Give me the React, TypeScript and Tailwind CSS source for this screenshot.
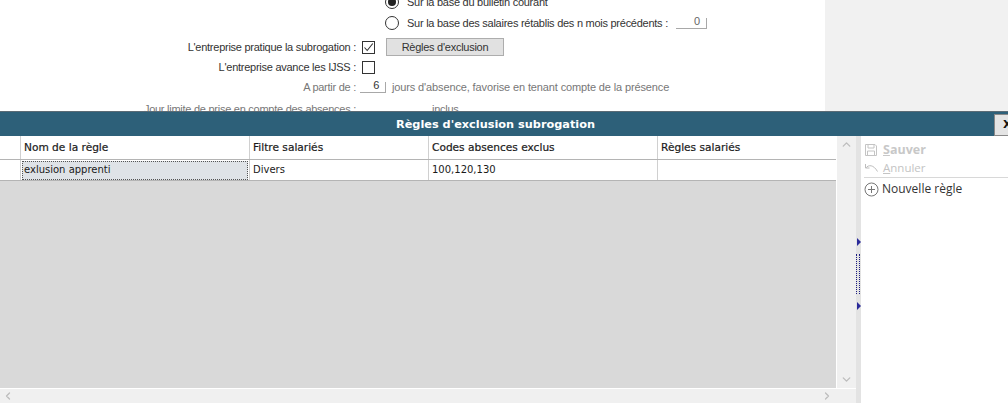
import { ChevronDown, ChevronLeft, ChevronRight, ChevronUp } from "lucide-react";

const form = "font-['Liberation_Sans',sans-serif] text-[11px] leading-[16px] tracking-[-0.26px]";
const grid = "font-['DejaVu_Sans',sans-serif] text-[10px] leading-[14px] text-[#1a1a1a]";

function Spin({ value, width }: { value: string; width: string }) {
  return (
    <div className={`${width} h-[11px] border-b border-r border-[#a8a8a8] flex justify-end items-center pr-[6px] text-[#666]`}>
      <span className="-mt-[3px]">{value}</span>
    </div>
  );
}

function Radio({ checked }: { checked?: boolean }) {
  return (
    <div className="w-[14px] h-[14px] rounded-full border border-[#333] bg-white flex items-center justify-center">
      {checked && <div className="w-[8px] h-[8px] rounded-full bg-[#222]" />}
    </div>
  );
}

function TopForm() {
  return (
    <div className="h-[111px] flex bg-white overflow-hidden">
      <div className={`w-[825px] ${form} text-[#333]`}>
        <div className="flex items-center h-[20px] -mt-[8px] pl-[385px] gap-[8px]">
          <Radio checked />
          <span>Sur la base du bulletin courant</span>
        </div>
        <div className="flex items-center h-[20px] mt-[1px] pl-[385px] gap-[8px]">
          <Radio />
          <span>Sur la base des salaires rétablis des n mois précédents :</span>
          <Spin value="0" width="w-[31px]" />
        </div>
        <div className="flex items-center h-[20px] mt-[4px]">
          <span className="w-[356px] text-right">L'entreprise pratique la subrogation :</span>
          <div className="ml-[6px] w-[13px] h-[13px] border border-[#333] flex items-center justify-center">
            <svg width="11" height="11" viewBox="0 0 11 11" fill="none" stroke="#333" strokeWidth="1.1">
              <path d="M1.5 5.5 L4.2 8.5 L9.8 1.5" />
            </svg>
          </div>
          <div className="ml-[11px] w-[118px] h-[18px] bg-[#e1e1e1] border border-[#adadad] flex items-center justify-center">
            Règles d'exclusion
          </div>
        </div>
        <div className="flex items-center h-[20px]">
          <span className="w-[356px] text-right">L'entreprise avance les IJSS :</span>
          <div className="ml-[6px] w-[13px] h-[13px] border border-[#333]" />
        </div>
        <div className="flex items-center h-[20px] text-[#777]">
          <span className="w-[356px] text-right">A partir de :</span>
          <Spin value="6" width="w-[26px] ml-[4px] [&>span]:text-[#333]" />
          <span className="ml-[6px] tracking-[-0.13px]">jours d'absence, favorise en tenant compte de la présence</span>
        </div>
        <div className="flex h-[20px] mt-[4px] text-[#777]">
          <span className="w-[356px] text-right">Jour limite de prise en compte des absences :</span>
          <span className="ml-[76px]">inclus</span>
        </div>
      </div>
      <div className="flex-1 bg-[#f1f1f1]" />
    </div>
  );
}

const cols = [
  { name: "Nom de la règle", w: "w-[229px]" },
  { name: "Filtre salariés", w: "w-[179px]" },
  { name: "Codes absences exclus", w: "w-[229px]" },
  { name: "Règles salariés", w: "flex-1" },
];

function Table() {
  return (
    <div className={`flex-1 flex flex-col ${grid}`}>
      <div className="h-[23px] flex bg-white border-b border-[#b4b4b4] box-content">
        <div className="w-[21px] border-r border-[#d0d0d0] shrink-0" />
        {cols.map((c) => (
          <div key={c.name} className={`${c.w} ${c.w === "flex-1" ? "" : "border-r border-[#d0d0d0]"} pl-[3px] pt-[4px] text-[10.6px] [-webkit-text-stroke:0.2px_#1a1a1a]`}>
            {c.name}
          </div>
        ))}
      </div>
      <div className="h-[20px] flex bg-white border-b border-[#b4b4b4] box-content">
        <div className="w-[21px] border-r border-[#d0d0d0] shrink-0" />
        <div className="w-[229px] border-r border-[#d0d0d0] p-[1px] pb-0">
          <div className="h-[19px] bg-[#dfe3e7] border border-dotted border-[#555] pl-[1px] pt-[1px]">exlusion apprenti</div>
        </div>
        <div className="w-[179px] border-r border-[#d0d0d0] pl-[3px] pt-[3px]">Divers</div>
        <div className="w-[229px] border-r border-[#d0d0d0] pl-[3px] pt-[3px]">100,120,130</div>
        <div className="flex-1" />
      </div>
      <div className="flex-1 bg-[#d9d9d9]" />
    </div>
  );
}

function Actions() {
  return (
    <div className="flex-1 bg-white pt-[6px] pl-[3px] font-['Open_Sans',sans-serif] text-[12px] leading-[16px]">
      <div className="flex items-center gap-[5px] h-[16px] text-[#c8c8c8] font-bold text-[12.5px]">
        <svg width="14" height="14" viewBox="0 0 14 14" fill="none" stroke="#c4c4c4" strokeWidth="1">
          <path d="M1.5 1.5 H11 L12.5 3 V12.5 H1.5 Z" />
          <path d="M4 1.5 V5 H10 V1.5" />
          <path d="M3.5 12.5 V8 H10.5 V12.5" />
        </svg>
        <span><span className="underline">S</span>auver</span>
      </div>
      <div className="flex items-center gap-[4px] h-[16px] mt-[2px] text-[#c4c4c4] text-[11.5px]">
        <svg width="15" height="12" viewBox="0 0 15 12" fill="none" stroke="#bdbdbd" strokeWidth="1">
          <path d="M1.5 2 V6 H5.5" />
          <path d="M1.8 6 C4.5 2.5 9.5 2.5 13.5 9.5" />
        </svg>
        <span><span className="underline">A</span>nnuler</span>
      </div>
      <div className="border-t border-[#d8d8d8] mt-[1px] mb-[2px]" />
      <div className="flex items-center gap-[3px] h-[18px] text-[#333]">
        <svg width="15" height="15" viewBox="0 0 15 15" fill="none" stroke="#777" strokeWidth="1">
          <circle cx="7.5" cy="7.5" r="6.5" />
          <path d="M7.5 4 V11 M4 7.5 H11" />
        </svg>
        <span>Nouvelle règle</span>
      </div>
    </div>
  );
}

function Splitter() {
  return (
    <div className="relative w-[5px] bg-[#e3e3e3]">
      <div className="absolute top-[102px] left-[1px] w-0 h-0 border-y-[4px] border-y-transparent border-l-[4px] border-l-[#2a2a9a]" />
      <div className="absolute top-[166px] left-[1px] w-0 h-0 border-y-[4px] border-y-transparent border-l-[4px] border-l-[#2a2a9a]" />
      <div className="absolute top-[118px] left-0 w-[4px] h-[40px] border-x border-dotted border-[#1c1c80]" />
    </div>
  );
}

export default function App() {
  return (
    <div className="w-[1008px] h-[403px] overflow-hidden bg-white flex flex-col">
      <TopForm />
      <div className="relative h-[25px] pt-[2px] pr-[17px] bg-[#2d6079] border-t border-[#5b6b75] flex items-center justify-center text-white font-bold font-['DejaVu_Sans',sans-serif] text-[11.3px]">
        Règles d'exclusion subrogation
        <div className="absolute left-[994px] top-[2px] w-[24px] h-[22px] bg-[#e4e4e4] border border-[#888] text-[#111] pl-[8px] leading-[20px]">X</div>
      </div>
      <div className="flex-1 flex min-h-0">
        <div className="w-[856px] flex flex-col">
          <div className="flex-1 flex min-h-0">
            <Table />
            <div className="w-[19px] ml-[1px] bg-[#f0f0f0] flex flex-col items-center justify-between py-[2px] text-[#bdbdbd]">
              <ChevronUp size={13} strokeWidth={2.5} />
              <ChevronDown size={13} strokeWidth={2.5} />
            </div>
          </div>
          <div className="h-[14px] mt-[1px] bg-[#f0f0f0] flex items-center justify-between pl-[2px] pr-[23px] text-[#bdbdbd]">
            <ChevronLeft size={12} strokeWidth={2.5} />
            <ChevronRight size={12} strokeWidth={2.5} />
          </div>
        </div>
        <Splitter />
        <Actions />
      </div>
    </div>
  );
}
